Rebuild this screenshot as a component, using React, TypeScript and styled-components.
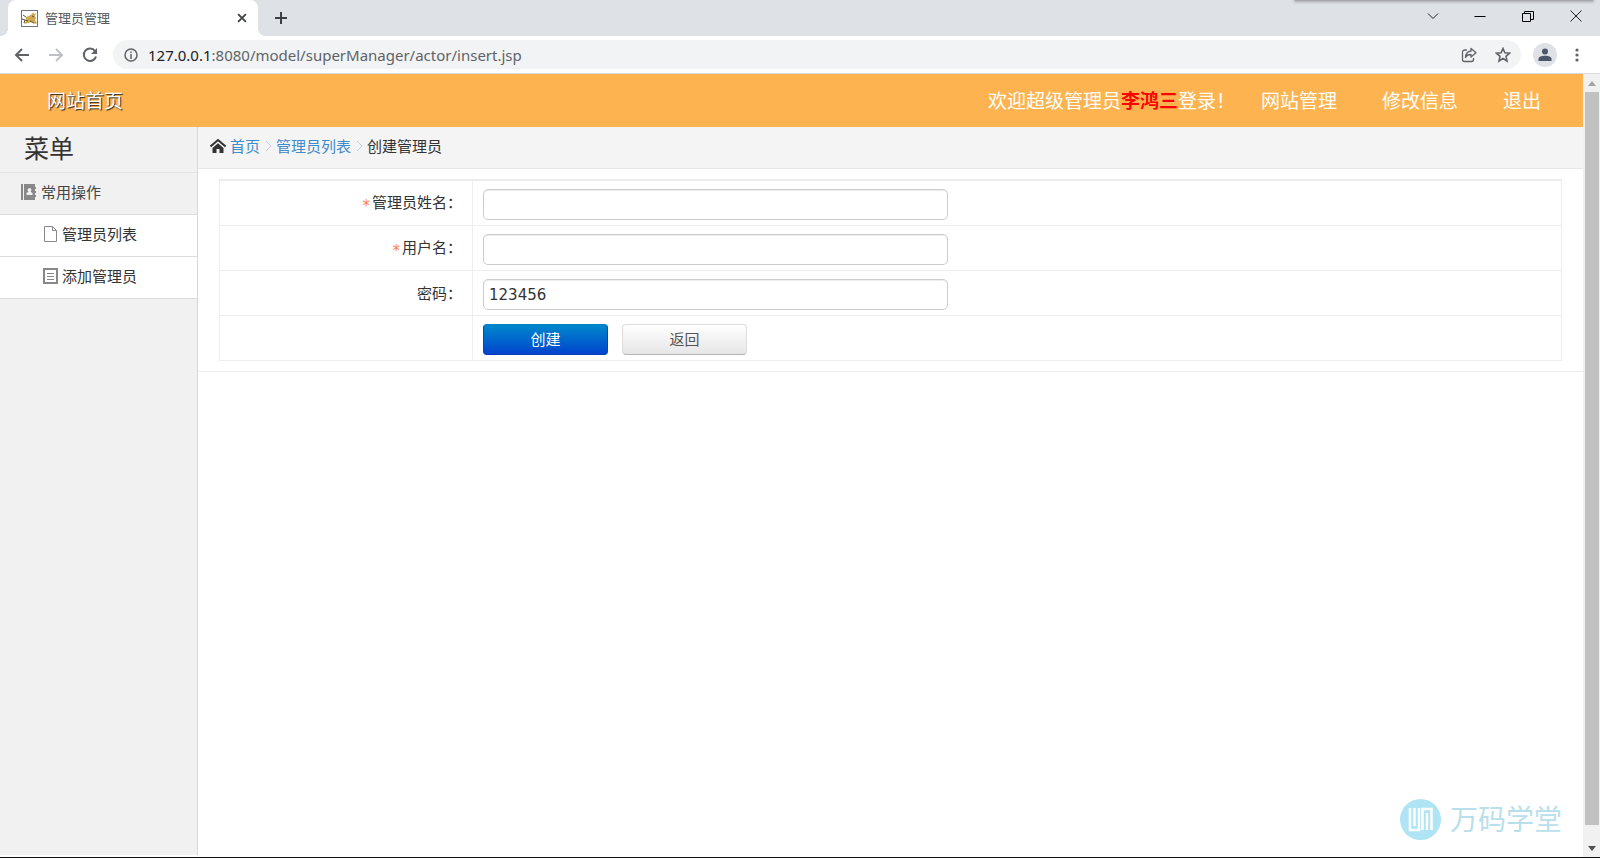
import React from "react";
import styled, { createGlobalStyle, css } from "styled-components";

const cjk = `"Noto Sans CJK SC", sans-serif`;

const GlobalStyle = createGlobalStyle`
  *, *::before, *::after { box-sizing: border-box; }
  body { margin: 0; font-family: ${cjk}; font-size: 15px; line-height: 20px; color: #333; background: #fff; }
  button, input { font: inherit; }
  a { text-decoration: none; color: inherit; }
  svg { display: block; flex: none; }
`;

const Window = styled.div`
  position: relative;
  display: flex;
  flex-direction: column;
  min-height: 100vh;
  border-bottom: 1px solid #111;
`;

/* ---- browser frame ---- */
const TabStrip = styled.div`
  display: flex;
  height: 36px;
  padding-left: 8px;
  background: #dee1e6;
`;
const Tab = styled.div`
  position: relative;
  display: flex;
  align-items: center;
  width: 250px;
  padding: 0 9px 0 13px;
  gap: 7px;
  background: #fff;
  border-radius: 8px 8px 0 0;
  font-size: 13px;
  color: #54585c;
  &::before, &::after {
    content: "";
    position: absolute;
    bottom: 0;
    width: 8px;
    height: 8px;
  }
  &::before { left: -8px; background: radial-gradient(circle at 0 0, transparent 8px, #fff 8px); }
  &::after { right: -8px; background: radial-gradient(circle at 100% 0, transparent 8px, #fff 8px); }
`;
const TabTitle = styled.span`
  flex: 1;
`;
const IconButton = styled.button<{ $w?: number; $h?: number; $bg?: string }>`
  display: flex;
  align-items: center;
  justify-content: center;
  width: ${(p) => p.$w ?? 28}px;
  height: ${(p) => p.$h ?? 28}px;
  padding: 0;
  border: 0;
  border-radius: 14px;
  background: ${(p) => p.$bg ?? "transparent"};
  color: #5f6368;
`;
const NewTabSlot = styled.div`
  display: flex;
  align-items: center;
  flex: 1;
  padding-left: 9px;
`;
const WindowButtons = styled.div`
  display: flex;
  height: 32px;
  align-items: center;
`;
const TopShadow = styled.div`
  position: absolute;
  top: 0;
  right: 7px;
  width: 298px;
  height: 1px;
  background: #a4a6aa;
  box-shadow: 0 0 3px 1px #a4a6aa;
`;
const Toolbar = styled.div`
  display: flex;
  align-items: center;
  height: 38px;
  padding: 0 9px 0 8px;
  background: #fff;
  border-bottom: 1px solid #dadce0;
`;
const NavButtons = styled.div`
  display: flex;
  gap: 6px;
  margin-right: 9px;
`;
const AddressBar = styled.div`
  display: flex;
  align-items: center;
  flex: 1;
  height: 29px;
  margin-right: 12px;
  padding: 0 4px 0 11px;
  gap: 10px;
  border-radius: 15px;
  background: #f1f3f4;
`;
const Address = styled.div`
  flex: 1;
  font-family: "Noto Sans", sans-serif;
  font-size: 15px;
  color: #5f6368;
`;
const Host = styled.span`
  color: #202124;
`;
const BarActions = styled.div`
  display: flex;
  gap: 6px;
`;
const ProfileActions = styled.div`
  display: flex;
  align-items: center;
  gap: 6px;
`;

/* ---- page ---- */
const Viewport = styled.div`
  display: flex;
  flex: 1;
`;
const Page = styled.div`
  position: relative;
  display: flex;
  flex: 1;
  flex-direction: column;
`;
const Header = styled.header`
  display: flex;
  align-items: center;
  justify-content: space-between;
  height: 53px;
  padding: 0 42px 2px 47px;
  background: #fdb450;
  color: #fff;
  font-size: 19px;
`;
const Brand = styled.a`
  text-shadow: 1px 1px 1px #222;
`;
const HeaderNav = styled.nav`
  display: flex;
  gap: 45px;
`;
const Welcome = styled.span`
  margin-right: -19px;
`;
const UserName = styled.b`
  color: #f00;
`;
const Columns = styled.div`
  display: flex;
  flex: 1;
`;
const Sidebar = styled.aside`
  width: 198px;
  margin-bottom: 2px;
  background: #f1f1f1;
  border-right: 1px solid #d8d8d8;
`;
const MenuTitle = styled.h2`
  margin: 0;
  height: 46px;
  padding-left: 24px;
  border-bottom: 1px solid #e4e4e4;
  font-size: 25px;
  font-weight: 400;
  line-height: 40px;
`;
const MenuItem = styled.a<{ $child?: boolean }>`
  display: flex;
  align-items: center;
  height: 42px;
  gap: 4px;
  padding: 0 0 3px 20px;
  border-bottom: 1px solid #dcdcdc;
  color: #444;
  ${(p) =>
    p.$child &&
    css`
      padding-left: 42px;
      background: #fff;
      color: #333;
    `}
`;
const Main = styled.main`
  flex: 1;
`;
const Crumbs = styled.nav`
  display: flex;
  align-items: center;
  height: 42px;
  gap: 4px;
  padding: 0 0 3px 12px;
  background: #f4f4f4;
  border-bottom: 1px solid #e6e6e6;
`;
const CrumbLink = styled.a`
  color: #428bca;
`;
const FormArea = styled.form`
  padding: 10px 21px;
  border-bottom: 1px solid #eee;
`;
const FormTable = styled.table`
  width: 100%;
  border-collapse: collapse;
  table-layout: fixed;
  border: 1px solid #ebebeb;
  border-top-width: 2px;
`;
const LabelCell = styled.th`
  width: 253px;
  height: 45px;
  padding: 0 10px 0 0;
  border: 1px solid #eee;
  font-weight: 400;
  text-align: right;
`;
const FieldCell = styled.td`
  padding: 4px 10px 0;
  border: 1px solid #eee;
`;
const Required = styled.span`
  margin-right: 2px;
  font-family: "DejaVu Sans", sans-serif;
  line-height: 1;
  vertical-align: -3px;
  color: #ff7f50;
`;
const TextField = styled.input`
  display: block;
  width: 43.5%;
  height: 31px;
  padding: 1px 5px 0;
  border: 1px solid #ccc;
  border-radius: 5px;
  background: #fff;
  box-shadow: inset 0 1px 1px rgba(0, 0, 0, 0.075);
  font-family: "DejaVu Sans", sans-serif;
  color: #333;
`;
const Actions = styled.div`
  display: flex;
  gap: 14px;
`;
const Button = styled.button<{ $primary?: boolean }>`
  width: 125px;
  height: 31px;
  padding: 0 0 1px;
  border: 1px solid #ddd;
  border-bottom-color: #b3b3b3;
  border-radius: 4px;
  background: linear-gradient(#fff, #e6e6e6);
  color: #555;
  ${(p) =>
    p.$primary &&
    css`
      border-color: #0080c4 #0044cc #003cb8;
      background: linear-gradient(#08c, #04c);
      color: #fff;
    `}
`;
const Watermark = styled.div`
  position: absolute;
  right: 21px;
  bottom: 17px;
  display: flex;
  align-items: center;
  gap: 9px;
  color: #b9dfea;
  font-size: 28px;
  line-height: 40px;
`;
const WatermarkName = styled.span`
  padding-bottom: 2px;
`;
const ScrollTrack = styled.div`
  display: flex;
  flex-direction: column;
  width: 17px;
  padding: 1px 1px 0 2px;
  background: #f1f1f1;
`;
const ScrollThumb = styled.div`
  flex: 1;
  margin-bottom: 15px;
  background: #c1c1c1;
`;

const Favicon = () => (
  <svg width="17" height="17" viewBox="0 0 17 17" aria-hidden="true">
    <rect x=".5" y=".5" width="16" height="16" fill="#fff" stroke="#6a7580" />
    <path d="M5 7l3-1 3-2 1-2 1 2 2-1-1 3 1 2-1 2 2 3-2 1-3-2-4 1-4 1 2-3z" fill="#d0a850" />
    <path d="M2 5l3 2M1 9l3 1-1 3M4 10l3 1M11 6l2 1M9 11l4 2" stroke="#5a5540" fill="none" />
  </svg>
);
const Stroke = ({ d, w = 16, s = 2, c = "currentColor" }: { d: string; w?: number; s?: number; c?: string }) => (
  <svg width={w} height={w} viewBox="0 0 16 16" fill="none" stroke={c} strokeWidth={s} aria-hidden="true">
    <path d={d} />
  </svg>
);
const Separator = () => (
  <svg width="8" height="12" viewBox="0 0 8 12" fill="none" stroke="#c4cfdd" aria-hidden="true">
    <path d="M2 1l5 5-5 5" />
  </svg>
);

export default function App() {
  return (
    <Window>
      <GlobalStyle />
      <TabStrip>
        <Tab>
          <Favicon />
          <TabTitle>管理员管理</TabTitle>
          <IconButton $w={14} $h={20} aria-label="关闭标签页">
            <Stroke w={14} d="M3.500 3.500l9 9M12.500 3.500l-9 9" c="#3c4043" />
          </IconButton>
        </Tab>
        <NewTabSlot>
          <IconButton aria-label="新标签页">
            <Stroke d="M8 2v12M2 8h12" c="#3c4043" />
          </IconButton>
        </NewTabSlot>
        <WindowButtons>
          <IconButton $w={47} aria-label="搜索标签页">
            <Stroke s={1} d="M3 5.500l5 5 5-5" c="#222" />
          </IconButton>
          <IconButton $w={48} aria-label="最小化">
            <Stroke s={1} d="M2.500 8.500h11" c="#000" />
          </IconButton>
          <IconButton $w={48} aria-label="还原">
            <Stroke s={1} d="M2.500 5.500h8v8h-8zM4.500 5.500v-2h9v8h-3" c="#000" />
          </IconButton>
          <IconButton $w={48} aria-label="关闭">
            <Stroke s={1} d="M2.500 2.500l11 11M13.500 2.500l-11 11" c="#222" />
          </IconButton>
        </WindowButtons>
      </TabStrip>
      <TopShadow />
      <Toolbar>
        <NavButtons>
          <IconButton aria-label="后退">
            <Stroke d="M15 8H2M8 2L2 8l6 6" />
          </IconButton>
          <IconButton aria-label="前进">
            <Stroke d="M1 8h13M8 2l6 6-6 6" c="#bdc1c6" />
          </IconButton>
          <IconButton aria-label="重新加载">
            <svg width="16" height="16" viewBox="0 0 16 16" fill="none" aria-hidden="true">
              <path d="M13 4a6.200 6.200 0 1 0 1 5.500" stroke="currentColor" strokeWidth="2" />
              <path d="M15 1v6H9z" fill="currentColor" />
            </svg>
          </IconButton>
        </NavButtons>
        <AddressBar>
          <svg width="14" height="14" viewBox="0 0 14 14" fill="none" stroke="#5f6368" aria-hidden="true">
            <circle cx="7" cy="7" r="6" strokeWidth="1.500" />
            <path d="M7 6v5M7 3.500v1.500" strokeWidth="1.500" />
          </svg>
          <Address>
            <Host>127.0.0.1</Host>:8080/model/superManager/actor/insert.jsp
          </Address>
          <BarActions>
            <IconButton aria-label="分享">
              <svg width="16" height="16" viewBox="0 0 16 16" fill="none" stroke="currentColor" strokeWidth="1.300" aria-hidden="true">
                <path d="M6 3H3.500A2 2 0 0 0 1.500 5v7.500a2 2 0 0 0 2 2h7a2 2 0 0 0 2-2V11" />
                <path d="M10 1.500l5 4.200-5 4.300V7.500c-3 0-4.500 1-5.500 3 .2-4 2-6 5.500-6.500z" strokeLinejoin="round" />
              </svg>
            </IconButton>
            <IconButton aria-label="收藏">
              <Stroke s={1.6} d="M8 1.500l1.900 4.300 4.600.4-3.500 3.100 1 4.700-4-2.500L4 14l1-4.700-3.500-3.100 4.600-.4z" />
            </IconButton>
          </BarActions>
        </AddressBar>
        <ProfileActions>
          <IconButton $w={24} $h={24} $bg="#dee1e6" aria-label="个人资料">
            <svg width="14" height="14" viewBox="0 0 14 14" fill="#4b5669" aria-hidden="true">
              <circle cx="7" cy="3.500" r="3" />
              <path d="M.5 13v-2c0-2 3-3.200 6.500-3.200s6.500 1.200 6.500 3.200v2z" />
            </svg>
          </IconButton>
          <IconButton aria-label="菜单">
            <svg width="4" height="16" viewBox="0 0 4 16" fill="currentColor" aria-hidden="true">
              <circle cx="2" cy="3" r="1.600" />
              <circle cx="2" cy="8" r="1.600" />
              <circle cx="2" cy="13" r="1.600" />
            </svg>
          </IconButton>
        </ProfileActions>
      </Toolbar>
      <Viewport>
        <Page>
          <Header>
            <Brand href="#home">网站首页</Brand>
            <HeaderNav>
              <Welcome>
                欢迎超级管理员<UserName>李鸿三</UserName>登录！
              </Welcome>
              <a href="#site">网站管理</a>
              <a href="#profile">修改信息</a>
              <a href="#logout">退出</a>
            </HeaderNav>
          </Header>
          <Columns>
            <Sidebar>
              <MenuTitle>菜单</MenuTitle>
              <MenuItem href="#common">
                <svg width="17" height="16" viewBox="0 0 17 16" fill="#888" aria-hidden="true">
                  <path d="M1 0h2v16H1zM4 0h11v3h1v2h-1v2h1v2h-1v2h1v2h-1v3H4z" />
                  <path d="M9.500 4a2 2 0 0 1 1 3.700l2 1.300v2h-6V9l2-1.300a2 2 0 0 1 1-3.700z" fill="#f0f0f0" />
                </svg>
                常用操作
              </MenuItem>
              <MenuItem $child href="#list">
                <svg width="16" height="16" viewBox="0 0 16 16" fill="none" stroke="#888" aria-hidden="true">
                  <path d="M2.500.500h8l4 4v11h-12zM10.500.500v4h4" />
                </svg>
                管理员列表
              </MenuItem>
              <MenuItem $child href="#add">
                <svg width="16" height="16" viewBox="0 0 16 16" fill="none" stroke="#888" aria-hidden="true">
                  <rect x="2" y="1" width="13" height="14" strokeWidth="2" />
                  <path d="M5 5.500h7M5 8.500h7M5 11.500h7" />
                </svg>
                添加管理员
              </MenuItem>
            </Sidebar>
            <Main>
              <Crumbs>
                <svg width="16" height="16" viewBox="0 0 16 16" aria-hidden="true">
                  <path d="M.5 8.500L8 2l7.500 6.500" fill="none" stroke="#333" strokeWidth="2" />
                  <path d="M2.500 10L8 5.200l5.500 4.800V15H9.500v-4h-3v4h-4z" fill="#333" />
                </svg>
                <CrumbLink href="#home">首页</CrumbLink>
                <Separator />
                <CrumbLink href="#list">管理员列表</CrumbLink>
                <Separator />
                <span>创建管理员</span>
              </Crumbs>
              <FormArea onSubmit={(e) => e.preventDefault()}>
                <FormTable>
                  <tbody>
                    <tr>
                      <LabelCell scope="row">
                        <Required>*</Required>
                        <label htmlFor="name">管理员姓名：</label>
                      </LabelCell>
                      <FieldCell>
                        <TextField id="name" type="text" />
                      </FieldCell>
                    </tr>
                    <tr>
                      <LabelCell scope="row">
                        <Required>*</Required>
                        <label htmlFor="user">用户名：</label>
                      </LabelCell>
                      <FieldCell>
                        <TextField id="user" type="text" />
                      </FieldCell>
                    </tr>
                    <tr>
                      <LabelCell scope="row">
                        <label htmlFor="password">密码：</label>
                      </LabelCell>
                      <FieldCell>
                        <TextField id="password" type="text" defaultValue="123456" />
                      </FieldCell>
                    </tr>
                    <tr>
                      <LabelCell as="td" />
                      <FieldCell>
                        <Actions>
                          <Button $primary type="submit">创建</Button>
                          <Button type="button">返回</Button>
                        </Actions>
                      </FieldCell>
                    </tr>
                  </tbody>
                </FormTable>
              </FormArea>
            </Main>
          </Columns>
          <Watermark>
            <svg width="41" height="41" viewBox="0 0 41 41" fill="none" aria-hidden="true">
              <circle cx="20.500" cy="20.500" r="20.500" fill="#aee4f3" />
              <path d="M10 9v22h9V9M14.500 9v18M22.500 31V10h9v21M27 14v17" stroke="#fff" strokeWidth="2.500" />
            </svg>
            <WatermarkName>万码学堂</WatermarkName>
          </Watermark>
        </Page>
        <ScrollTrack>
          <IconButton $w={14} $h={17} aria-label="向上滚动">
            <svg width="8" height="5" viewBox="0 0 8 5" fill="#a3a3a3" aria-hidden="true"><path d="M4 0l4 5H0z" /></svg>
          </IconButton>
          <ScrollThumb />
          <IconButton $w={14} $h={17} aria-label="向下滚动">
            <svg width="8" height="5" viewBox="0 0 8 5" fill="#505050" aria-hidden="true"><path d="M0 0h8L4 5z" /></svg>
          </IconButton>
        </ScrollTrack>
      </Viewport>
    </Window>
  );
}
